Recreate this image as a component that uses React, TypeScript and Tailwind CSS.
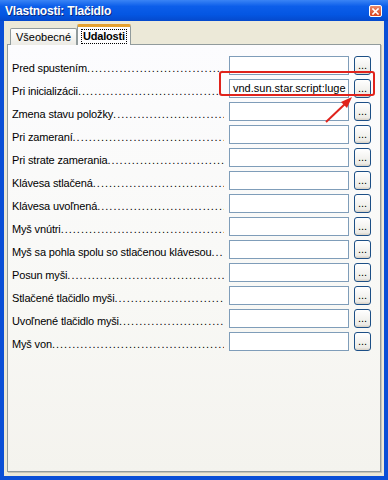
import React from 'react';

const events = [
  { label: 'Pred spustením', value: '' },
  { label: 'Pri inicializácii', value: 'vnd.sun.star.script:luge' },
  { label: 'Zmena stavu položky', value: '' },
  { label: 'Pri zameraní', value: '' },
  { label: 'Pri strate zamerania', value: '' },
  { label: 'Klávesa stlačená', value: '' },
  { label: 'Klávesa uvoľnená', value: '' },
  { label: 'Myš vnútri', value: '' },
  { label: 'Myš sa pohla spolu so stlačenou klávesou', value: '' },
  { label: 'Posun myši', value: '' },
  { label: 'Stlačené tlačidlo myši', value: '' },
  { label: 'Uvoľnené tlačidlo myši', value: '' },
  { label: 'Myš von', value: '' },
];

const DOTS = '.'.repeat(120);

const EventRow: React.FC<{ label: string; value: string }> = ({ label, value }) => (
  <div className="flex items-center h-[23px]">
    <div className="flex w-[212px] overflow-hidden whitespace-nowrap text-[11px] text-black pt-[6px]">
      <span className="tracking-[-0.15px]">{label}</span>
      <span className="overflow-hidden tracking-[1px]">{DOTS}</span>
    </div>
    <div className="ml-[5px] w-[120px] h-[19px] border border-[#7f9db9] bg-white text-[11px] leading-[17px] pl-[3px] overflow-hidden whitespace-nowrap">
      {value}
    </div>
    <button className="ml-[5px] w-[17px] h-[19px] rounded-[3px] border border-[#1c4f86] bg-[linear-gradient(#ffffff,#ecebe6_85%,#d6d0c5)] text-[11px] leading-[11px] text-black flex items-end justify-center pb-[3px]">
      ...
    </button>
  </div>
);

export default function App() {
  return (
    <div className="w-[388px] h-[480px] bg-[#0a4fd6] flex flex-col font-['Liberation_Sans',Arial,sans-serif] relative overflow-hidden">
      {/* title bar */}
      <div className="h-[21px] flex items-center justify-between pl-[5px] pr-[6px] bg-[linear-gradient(#3a84f5,#0c5eea_30%,#0456e2_70%,#0549cc)]">
        <span className="text-white font-bold text-[12px] tracking-[-0.2px] [text-shadow:1px_1px_#0a2a80]">Vlastnosti: Tlačidlo</span>
        <div className="w-[13px] h-[12px] mt-[1px] rounded-[2px] border border-white bg-[linear-gradient(#e98a6b,#d8421d)] flex items-center justify-center">
          <svg width="7" height="7" viewBox="0 0 7 7">
            <path d="M1 1 L6 6 M6 1 L1 6" stroke="white" strokeWidth="1.6" strokeLinecap="square" />
          </svg>
        </div>
      </div>

      {/* client area */}
      <div className="flex-1 mx-[4px] mb-[4px] bg-[#ece9d8] flex flex-col pt-[3px] px-[3px] pb-[4px]">
        {/* tabs */}
        <div className="flex items-end h-[20px] pl-[3px] relative z-10">
          <div className="h-[17px] px-[5px] border border-b-0 border-[#919b9c] bg-[linear-gradient(#ffffff,#ecebe5)] text-[11px] flex items-center rounded-t-[2px] mb-[-1px]">
            Všeobecné
          </div>
          <div className="h-[21px] px-[3px] border-x border-[#919b9c] border-t-[3px] border-t-[#e6a12f] bg-[#fcfcfe] text-[11px] font-bold flex items-center rounded-t-[2px] mb-[-1px]">
            <span className="border border-dotted border-black px-[1px] leading-[13px] tracking-[-0.2px]">Udalosti</span>
          </div>
        </div>

        {/* tab page */}
        <div className="flex-1 border border-[#919b9c] bg-[linear-gradient(#fcfcfe,#f8f8f5_60%,#f4f3ee)] shadow-[1px_1px_0_#c8c5b8] pt-[9px] pl-[4px]">
          {events.map((e) => (
            <EventRow key={e.label} label={e.label} value={e.value} />
          ))}
        </div>
      </div>

      {/* red highlight */}
      <div className="absolute left-[219px] top-[71px] w-[156px] h-[25px] border-2 border-[#e0231c] rounded-[3px]" />
      <svg className="absolute left-0 top-0" width="388" height="480" viewBox="0 0 388 480">
        <line x1="326" y1="122" x2="346" y2="103" stroke="#e0231c" strokeWidth="2" />
        <polygon points="352,97 341,102 347,108" fill="#e0231c" />
      </svg>
    </div>
  );
}
